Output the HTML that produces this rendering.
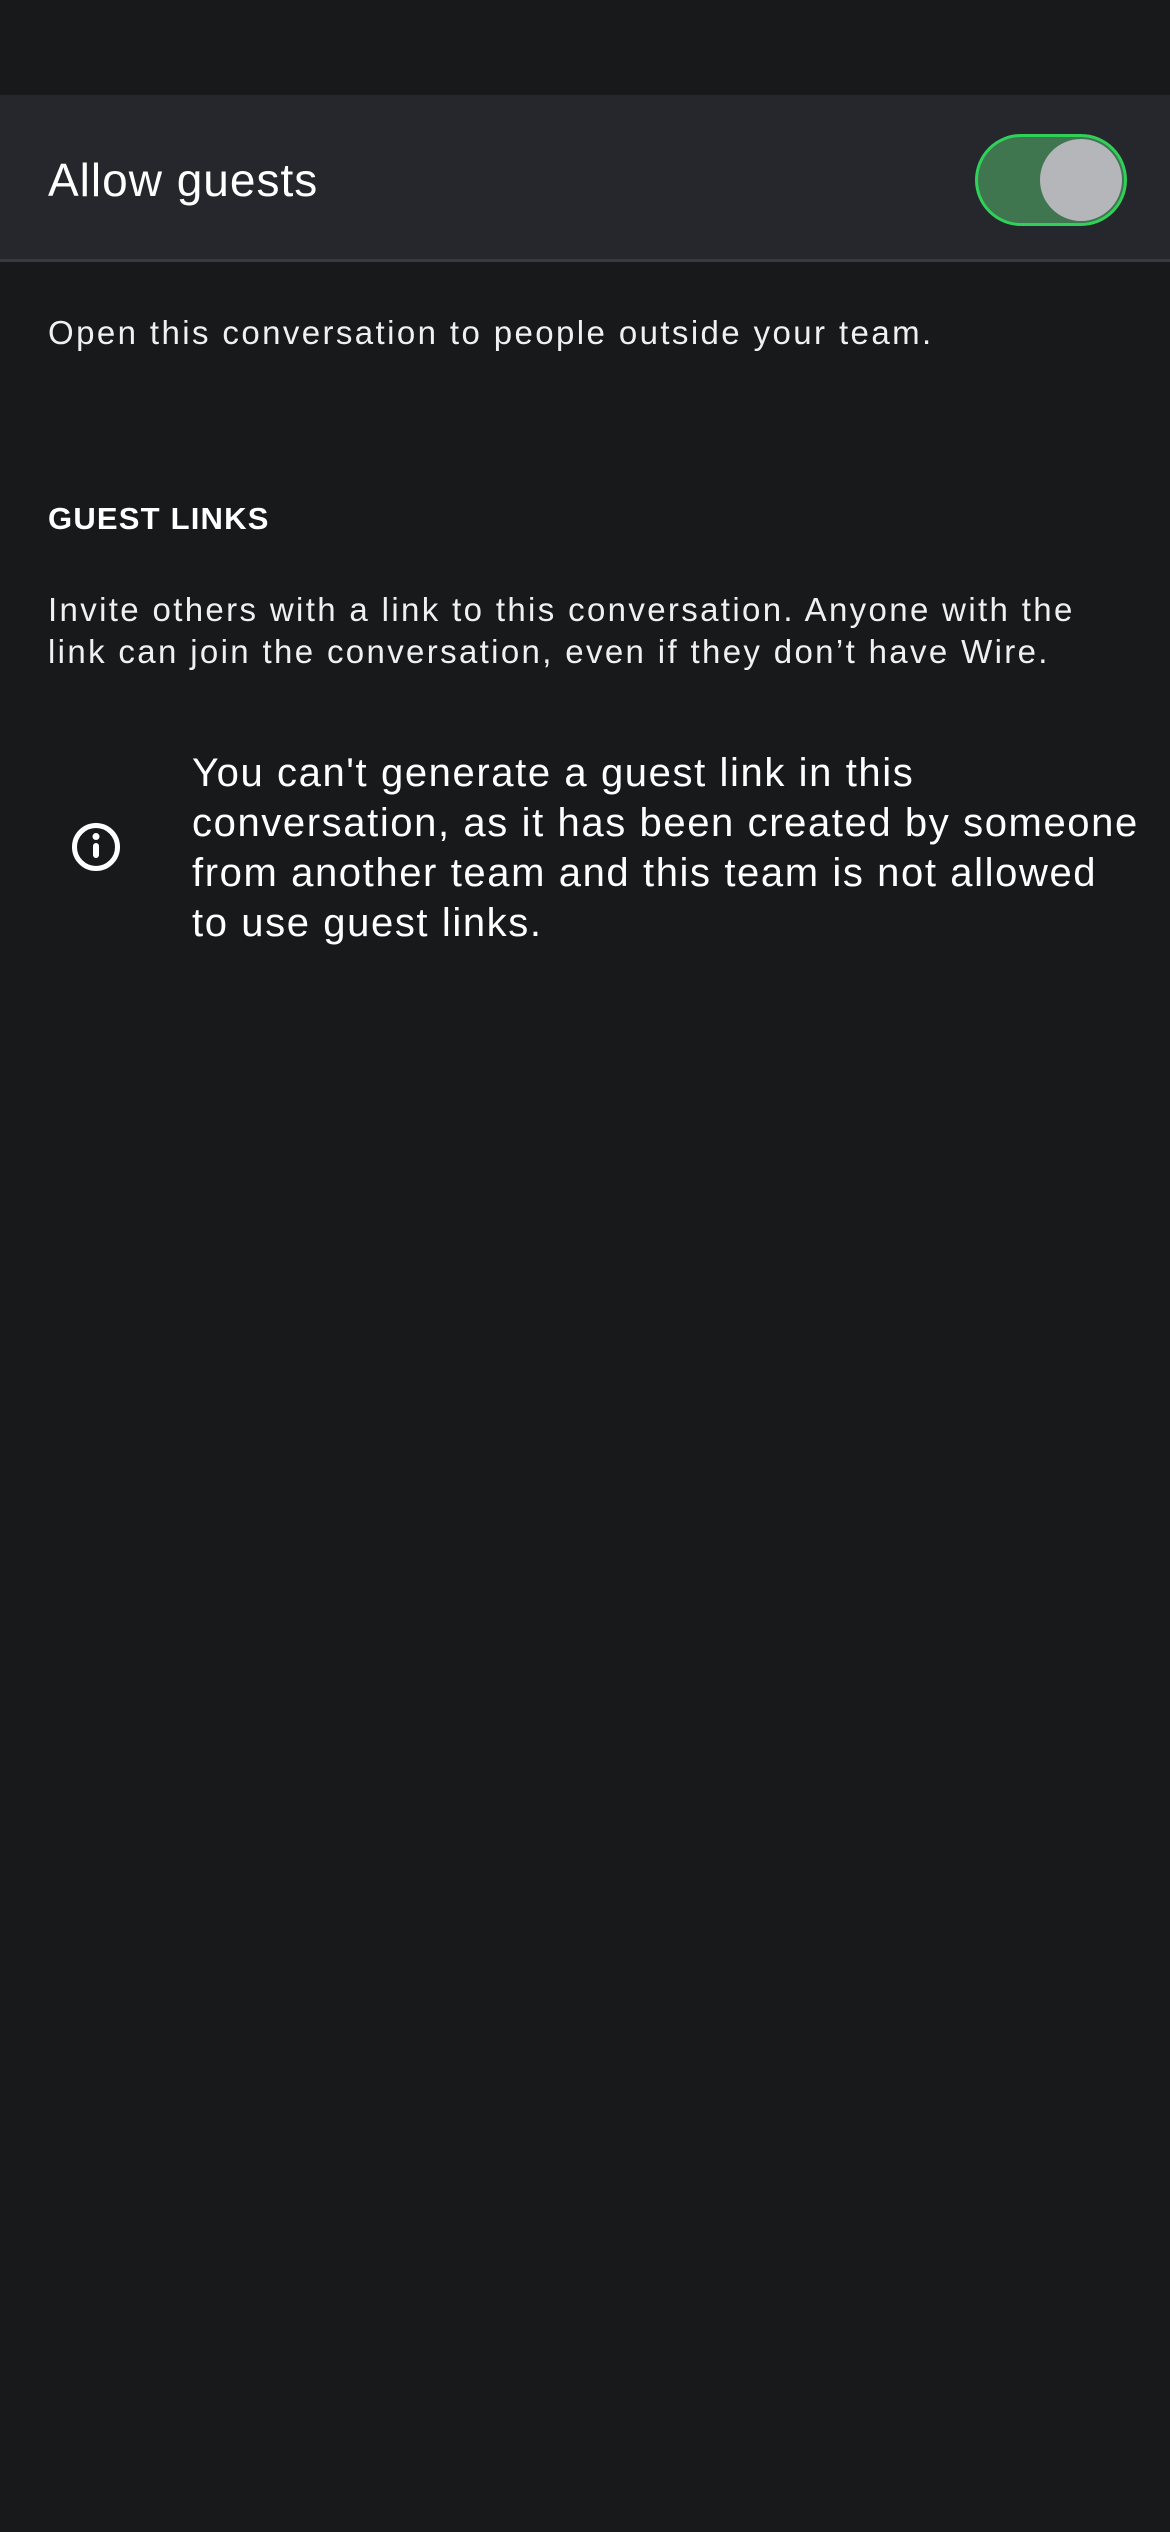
<!DOCTYPE html>
<html><head><meta charset="utf-8"><style>
html,body{margin:0;padding:0;width:1170px;height:2532px;background:#18191b;overflow:hidden;font-family:"Liberation Sans",sans-serif;color:#fff}
.bar{position:absolute;left:0;top:95px;width:1170px;height:164px;background:#26272c;border-bottom:3px solid #3a3b40}
.t{position:absolute;white-space:nowrap}
</style></head><body>
<div class="bar"></div>
<div class="t" style="left:48px;top:152px;font-size:46px;line-height:56px;letter-spacing:1px">Allow guests</div>
<div style="position:absolute;left:975px;top:134px;width:146px;height:86px;border:3px solid #30d158;border-radius:46px;background:#3f7650"></div>
<div style="position:absolute;left:1040px;top:139px;width:82px;height:82px;border-radius:50%;background:#b5b6ba"></div>
<div class="t" style="left:48px;top:312px;font-size:33px;line-height:42px;color:#f0f0f0;letter-spacing:2.4px">Open this conversation to people outside your team.</div>
<div class="t" style="left:48px;top:499px;font-size:31px;line-height:40px;font-weight:bold;letter-spacing:1.2px">GUEST LINKS</div>
<div class="t" style="left:48px;top:589px;font-size:33px;line-height:42px;color:#f0f0f0;letter-spacing:2.35px">Invite others with a link to this conversation. Anyone with the<br>link can join the conversation, even if they don’t have Wire.</div>
<svg style="position:absolute;left:70px;top:821px" width="52" height="52" viewBox="0 0 52 52"><circle cx="26" cy="26" r="21.5" fill="none" stroke="#fff" stroke-width="5"/><circle cx="26" cy="15.5" r="3.5" fill="#fff"/><rect x="23" y="22" width="6" height="15" rx="3" fill="#fff"/></svg>
<div class="t" style="left:192px;top:748px;font-size:40px;line-height:50px;letter-spacing:1.6px">You can't generate a guest link in this<br>conversation, as it has been created by someone<br>from another team and this team is not allowed<br>to use guest links.</div>
</body></html>
